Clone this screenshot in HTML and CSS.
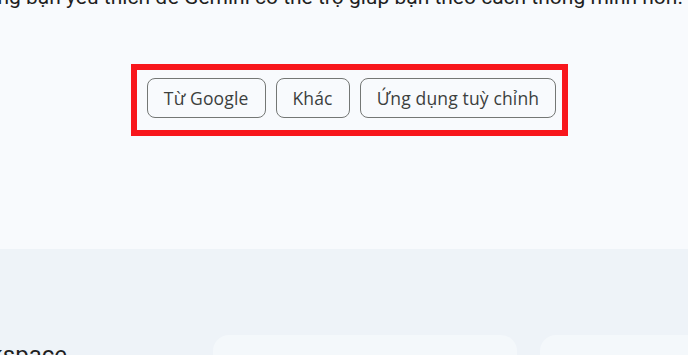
FILE: index.html
```html
<!DOCTYPE html>
<html lang="vi">
<head>
<meta charset="utf-8">
<link rel="stylesheet" href="styles.css">
</head>
<body>
<div class="page">
  <section class="intro">
    <p class="lead">Kết nối các ứng dụng bạn yêu thích để Gemini có thể trợ giúp bạn theo cách thông minh hơn.</p>
    <div class="chips">
      <button class="chip">Từ Google</button>
      <button class="chip">Khác</button>
      <button class="chip">Ứng dụng tuỳ chỉnh</button>
    </div>
    <div class="highlight"></div>
  </section>
  <section class="band">
    <div class="band-row">
      <div class="band-title"><h2>Google Workspace</h2></div>
      <div class="card"></div>
      <div class="card"></div>
    </div>
  </section>
</div>
</body>
</html>
```
FILE: styles.css
```css
html, body {
  margin: 0;
  padding: 0;
}
body {
  width: 688px;
  height: 355px;
  overflow: hidden;
  background: #f8fafd;
  font-family: Roboto, "Noto Sans", sans-serif;
  color: #1f1f1f;
}
.page {
  position: relative;
  width: 688px;
  height: 355px;
  overflow: hidden;
}
.intro {
  position: relative;
  display: flow-root;
  height: 249px;
}
.lead {
  margin: -17px 0 0 0;
  padding-right: 5px;
  display: flex;
  justify-content: flex-end;
  white-space: nowrap;
  font-size: 21px;
  line-height: 28px;
  color: #1f1f1f;
}
.chips {
  display: flex;
  justify-content: center;
  gap: 10px;
  margin-top: 67px;
  padding-left: 15px;
}
.chip {
  height: 40px;
  padding: 0 16px;
  border: 1px solid #747775;
  border-radius: 8px;
  background: transparent;
  font-family: "Open Sans", "Noto Sans", sans-serif;
  font-weight: 500;
  font-size: 17.5px;
  letter-spacing: 0.15px;
  color: #3c3f3e;
}
.highlight {
  position: absolute;
  left: 131px;
  top: 64px;
  width: 425px;
  height: 60px;
  border: 6px solid #f8161c;
}
.band {
  height: 106px;
  background: #eef3f8;
}
.band-row {
  display: flex;
  gap: 23px;
  padding-top: 86px;
}
.band-title {
  width: 190px;
  display: flex;
  justify-content: flex-end;
  white-space: nowrap;
}
.band-title h2 {
  margin: 4px 123px 0 0;
  font-size: 24px;
  font-weight: 400;
  line-height: 32px;
  color: #1f1f1f;
}
.card {
  width: 304px;
  height: 120px;
  flex-shrink: 0;
  background: #f4f8fb;
  border-radius: 16px;
}
```
